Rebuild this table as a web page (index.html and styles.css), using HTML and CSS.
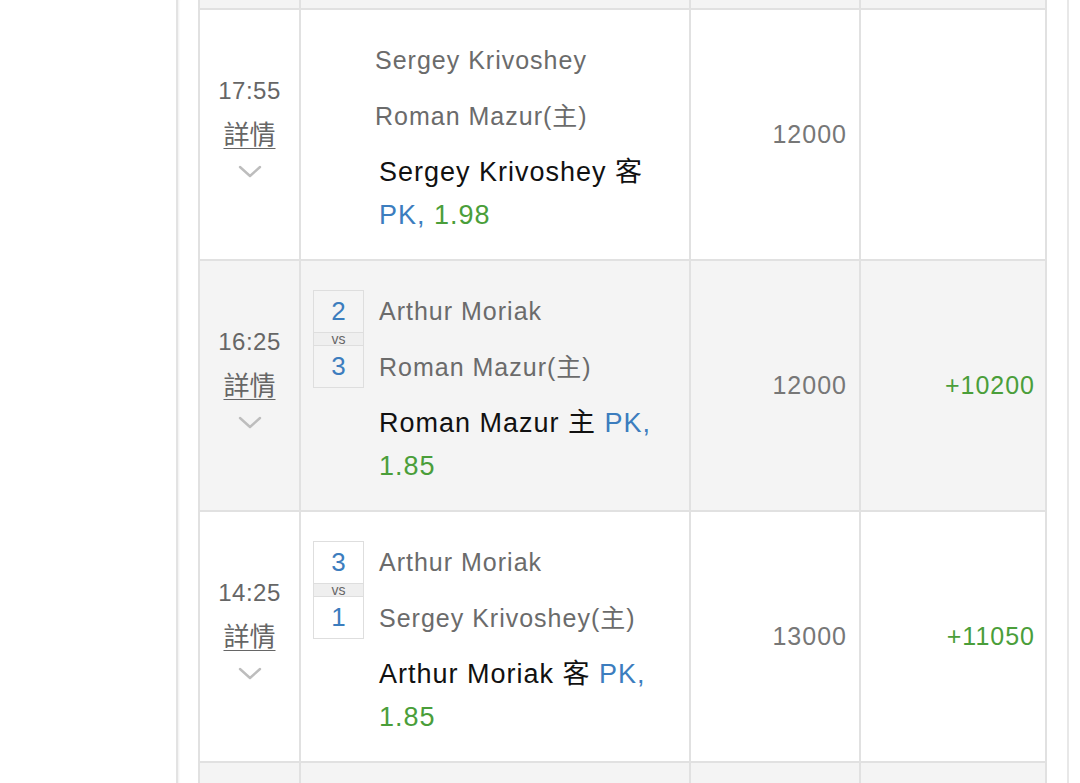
FILE: index.html
```html
<!DOCTYPE html>
<html lang="zh-Hant">
<head>
<meta charset="utf-8">
<title>投注記錄</title>
<link rel="stylesheet" href="styles.css">
</head>
<body>
<div class="page">
  <div class="side"></div>
  <div class="panel">
    <table class="bets">
      <colgroup>
        <col class="c-time"><col class="c-match"><col class="c-amount"><col class="c-result">
      </colgroup>
      <tbody>
        <tr class="strip alt"><td></td><td></td><td></td><td></td></tr>
        <tr class="row">
          <td class="time-cell">
            <div class="time-block">
              <div class="time">17:55</div>
              <div class="detail">詳情</div>
              <svg class="chev" width="24" height="13" viewBox="0 0 24 13"><polyline points="2,2 12,11 22,2" fill="none" stroke="#bdbdbd" stroke-width="2.4" stroke-linecap="round" stroke-linejoin="round"/></svg>
            </div>
          </td>
          <td class="match-cell">
            <div class="match">
              <div class="score-empty"></div>
              <div class="names">
                <div class="name">Sergey Krivoshey</div>
                <div class="name">Roman Mazur(主)</div>
              </div>
            </div>
            <div class="pick">Sergey Krivoshey 客 <span class="hcp">PK,</span> <span class="odds">1.98</span></div>
          </td>
          <td class="amount">12000</td>
          <td class="result"></td>
        </tr>
        <tr class="row alt">
          <td class="time-cell">
            <div class="time-block">
              <div class="time">16:25</div>
              <div class="detail">詳情</div>
              <svg class="chev" width="24" height="13" viewBox="0 0 24 13"><polyline points="2,2 12,11 22,2" fill="none" stroke="#bdbdbd" stroke-width="2.4" stroke-linecap="round" stroke-linejoin="round"/></svg>
            </div>
          </td>
          <td class="match-cell">
            <div class="match">
              <div class="score">
                <div class="num">2</div>
                <div class="vs">vs</div>
                <div class="num">3</div>
              </div>
              <div class="names">
                <div class="name">Arthur Moriak</div>
                <div class="name">Roman Mazur(主)</div>
              </div>
            </div>
            <div class="pick">Roman Mazur 主 <span class="hcp">PK,</span> <span class="odds">1.85</span></div>
          </td>
          <td class="amount">12000</td>
          <td class="result">+10200</td>
        </tr>
        <tr class="row">
          <td class="time-cell">
            <div class="time-block">
              <div class="time">14:25</div>
              <div class="detail">詳情</div>
              <svg class="chev" width="24" height="13" viewBox="0 0 24 13"><polyline points="2,2 12,11 22,2" fill="none" stroke="#bdbdbd" stroke-width="2.4" stroke-linecap="round" stroke-linejoin="round"/></svg>
            </div>
          </td>
          <td class="match-cell">
            <div class="match">
              <div class="score">
                <div class="num">3</div>
                <div class="vs">vs</div>
                <div class="num">1</div>
              </div>
              <div class="names">
                <div class="name">Arthur Moriak</div>
                <div class="name">Sergey Krivoshey(主)</div>
              </div>
            </div>
            <div class="pick">Arthur Moriak 客 <span class="hcp">PK,</span> <span class="odds">1.85</span></div>
          </td>
          <td class="amount">13000</td>
          <td class="result">+11050</td>
        </tr>
        <tr class="row alt"><td></td><td></td><td></td><td></td></tr>
      </tbody>
    </table>
  </div>
</div>
</body>
</html>
```

FILE: styles.css
```css
* { box-sizing: border-box; }

html, body {
  margin: 0;
  background: #fff;
}

body {
  font-family: "Liberation Sans", "Noto Sans CJK TC", sans-serif;
  color: #222;
}

.page {
  display: flex;
  height: 783px;
  overflow: hidden;
}

.side {
  flex: none;
  width: 176px;
}

.panel {
  flex: none;
  width: 893px;
  padding: 0 20px;
  border-left: 2px solid #e3e3e3;
  border-right: 2px solid #e8e8e8;
  box-shadow: inset 2px 0 2px -1px #f0f0f0;
}

.bets {
  width: 849px;
  table-layout: fixed;
  border-collapse: separate;
  border-spacing: 0;
  border-left: 2px solid #e1e1e1;
}

.c-time { width: 101px; }
.c-match { width: 390px; }
.c-amount { width: 170px; }
.c-result { width: 186px; }

.bets td {
  padding: 0;
  border-right: 2px solid #e1e1e1;
  border-bottom: 2px solid #e1e1e1;
  vertical-align: middle;
}

.alt td { background: #f4f4f4; }

.strip td { height: 10px; }

.row td { height: 251px; }

/* time column */
.time-cell { text-align: center; }

.time-block {
  padding-bottom: 22px;
}

.time {
  font-size: 24px;
  line-height: 44px;
  color: #666;
  letter-spacing: 0.5px;
}

.detail {
  font-size: 26px;
  line-height: 44px;
  color: #666;
  text-decoration: underline;
  text-underline-offset: 4px;
  text-decoration-thickness: 1px;
}

.chev {
  display: block;
  margin: 8px auto 0;
}

/* match column */
.bets td.match-cell {
  padding: 0 20px 0 12px;
}

.match {
  display: flex;
  align-items: flex-start;
}

.score-empty {
  flex: none;
  width: 47px;
  margin-right: 15px;
}

.score {
  flex: none;
  width: 51px;
  margin: 7px 15px 0 0;
  border: 1px solid #dedede;
  text-align: center;
}

.num {
  height: 41px;
  line-height: 41px;
  font-size: 26px;
  color: #3c7dbe;
}

.vs {
  height: 14px;
  line-height: 12px;
  font-size: 14px;
  color: #666;
  background: #efefef;
  border-top: 1px solid #dedede;
  border-bottom: 1px solid #dedede;
}

.names {
  flex: 1;
  min-width: 0;
}

.name {
  font-size: 25px;
  line-height: 56px;
  color: #6b6b6b;
  letter-spacing: 1px;
  white-space: nowrap;
}

.pick {
  margin-top: 7px;
  padding-left: 66px;
  font-size: 27px;
  line-height: 43px;
  color: #111;
  letter-spacing: 1px;
}

.hcp { color: #3c7dbe; }
.odds { color: #4a9e3a; }

/* amount / result */
.bets td.amount,
.bets td.result {
  text-align: right;
  font-size: 25px;
  letter-spacing: 1px;
}

.bets td.amount {
  padding-right: 12px;
  color: #777;
}

.bets td.result {
  padding-right: 10px;
  color: #4a9e3a;
}
```
